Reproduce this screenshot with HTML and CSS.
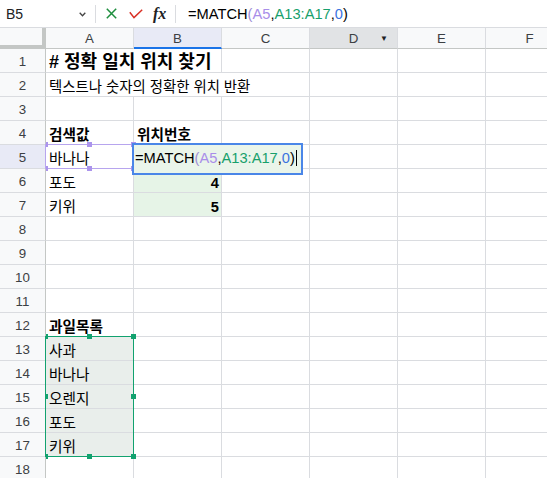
FILE: index.html
```html
<!DOCTYPE html>
<html>
<head>
<meta charset="utf-8">
<link rel="stylesheet" href="styles.css">
</head>
<body>
<div class="fbar">
  <div class="namebox"><span class="nb-text">B5</span>
    <svg class="chev" width="7" height="5" viewBox="0 0 7 5"><polyline points="0.7,0.8 3.5,3.8 6.3,0.8" fill="none" stroke="#444" stroke-width="1.3"/></svg>
  </div>
  <div class="sep"></div>
  <svg class="ic-x" width="11" height="11" viewBox="0 0 11 11"><path d="M0.8 0.8 L10.2 10.2 M10.2 0.8 L0.8 10.2" stroke="#1e8e3e" stroke-width="1.5" fill="none"/></svg>
  <svg class="ic-ok" width="14" height="10" viewBox="0 0 14 10"><polyline points="0.8,3.2 5,8.6 13.2,0.8" fill="none" stroke="#d93025" stroke-width="1.5"/></svg>
  <span class="fx">fx</span>
  <div class="sep sep2"></div>
  <div class="ftext">=MATCH<span class="par">(</span><span class="r1">A5</span>,<span class="r2">A13:A17</span>,<span class="num">0</span>)</div>
</div>

<div class="sheet">
  <div class="hrow">
    <div class="corner"></div>
    <div class="ch">A</div>
    <div class="ch ch-sel">B</div>
    <div class="ch">C</div>
    <div class="ch ch-hover">D<span class="tri">&#9660;</span></div>
    <div class="ch">E</div>
    <div class="ch">F</div>
  </div>

  <div class="row"><div class="rh">1</div><div class="c span2 title"># 정확 일치 위치 찾기</div><div class="c"></div><div class="c"></div><div class="c"></div><div class="c"></div></div>
  <div class="row"><div class="rh">2</div><div class="c span3 sub">텍스트나 숫자의 정확한 위치 반환</div><div class="c"></div><div class="c"></div><div class="c"></div></div>
  <div class="row"><div class="rh">3</div><div class="c"></div><div class="c"></div><div class="c"></div><div class="c"></div><div class="c"></div><div class="c"></div></div>
  <div class="row"><div class="rh">4</div><div class="c b">검색값</div><div class="c b">위치번호</div><div class="c"></div><div class="c"></div><div class="c"></div><div class="c"></div></div>
  <div class="row"><div class="rh rh-sel">5</div><div class="c">바나나</div><div class="c fill-g"></div><div class="c"></div><div class="c"></div><div class="c"></div><div class="c"></div></div>
  <div class="row"><div class="rh">6</div><div class="c">포도</div><div class="c fill-g b right">4</div><div class="c"></div><div class="c"></div><div class="c"></div><div class="c"></div></div>
  <div class="row"><div class="rh">7</div><div class="c">키위</div><div class="c fill-g b right">5</div><div class="c"></div><div class="c"></div><div class="c"></div><div class="c"></div></div>
  <div class="row"><div class="rh">8</div><div class="c"></div><div class="c"></div><div class="c"></div><div class="c"></div><div class="c"></div><div class="c"></div></div>
  <div class="row"><div class="rh">9</div><div class="c"></div><div class="c"></div><div class="c"></div><div class="c"></div><div class="c"></div><div class="c"></div></div>
  <div class="row"><div class="rh">10</div><div class="c"></div><div class="c"></div><div class="c"></div><div class="c"></div><div class="c"></div><div class="c"></div></div>
  <div class="row"><div class="rh">11</div><div class="c"></div><div class="c"></div><div class="c"></div><div class="c"></div><div class="c"></div><div class="c"></div></div>
  <div class="row"><div class="rh">12</div><div class="c b">과일목록</div><div class="c"></div><div class="c"></div><div class="c"></div><div class="c"></div><div class="c"></div></div>
  <div class="row"><div class="rh">13</div><div class="c fill-r">사과</div><div class="c"></div><div class="c"></div><div class="c"></div><div class="c"></div><div class="c"></div></div>
  <div class="row"><div class="rh">14</div><div class="c fill-r">바나나</div><div class="c"></div><div class="c"></div><div class="c"></div><div class="c"></div><div class="c"></div></div>
  <div class="row"><div class="rh">15</div><div class="c fill-r">오렌지</div><div class="c"></div><div class="c"></div><div class="c"></div><div class="c"></div><div class="c"></div></div>
  <div class="row"><div class="rh">16</div><div class="c fill-r">포도</div><div class="c"></div><div class="c"></div><div class="c"></div><div class="c"></div><div class="c"></div></div>
  <div class="row"><div class="rh">17</div><div class="c fill-r">키위</div><div class="c"></div><div class="c"></div><div class="c"></div><div class="c"></div><div class="c"></div></div>
  <div class="row"><div class="rh">18</div><div class="c"></div><div class="c"></div><div class="c"></div><div class="c"></div><div class="c"></div><div class="c"></div></div>

  <div class="rng rng-a5">
    <i class="hd tl"></i><i class="hd tm"></i><i class="hd tr"></i>
    <i class="hd bl"></i><i class="hd bm"></i><i class="hd br"></i>
  </div>
  <div class="rng rng-list">
    <i class="hd tl"></i><i class="hd tm"></i><i class="hd tr"></i>
    <i class="hd ml"></i><i class="hd mr"></i>
    <i class="hd bl"></i><i class="hd bm"></i><i class="hd br"></i>
  </div>
  <div class="editor">=MATCH<span class="par">(</span><span class="r1">A5</span>,<span class="r2">A13:A17</span>,<span class="num">0</span>)<span class="caret"></span></div>
</div>
</body>
</html>
```

FILE: styles.css
```css
html, body {
  margin: 0;
  padding: 0;
  width: 547px;
  height: 478px;
  overflow: hidden;
  background: #fff;
  font-family: "Liberation Sans", Arial, "Noto Sans CJK KR", sans-serif;
  color: #000;
}

/* formula bar */
.fbar {
  height: 27px;
  border-bottom: 1px solid #dadce0;
  display: flex;
  align-items: center;
}
.namebox {
  width: 95px;
  box-sizing: border-box;
  padding-left: 6px;
  padding-right: 9px;
  display: flex;
  align-items: center;
  font-size: 14px;
  color: #202124;
}
.nb-text { flex: 1; }
.chev { display: block; margin-top: 1px; }
.sep {
  width: 1px;
  height: 18px;
  background: #dadce0;
}
.ic-x { display: block; margin-left: 10px; }
.ic-ok { display: block; margin-left: 12px; }
.fx {
  margin-left: 10px;
  width: 14px;
  font-family: "Liberation Serif", serif;
  font-style: italic;
  font-weight: bold;
  font-size: 16px;
  color: #202124;
  line-height: 14px;
}
.sep2 { margin-left: 8px; }
.ftext {
  margin-left: 12px;
  font-size: 14.67px;
  color: #000;
  white-space: nowrap;
}

.par { color: #a08fd6; }
.r1 { color: #a98ee9; }
.r2 { color: #17a06c; }
.num { color: #3a73e0; }

/* sheet */
.sheet {
  position: relative;
  width: 574px;
}
.hrow, .row {
  display: grid;
  grid-template-columns: 46px repeat(6, 88px);
}
.hrow { height: 21px; }
.row { height: 24px; }

.corner {
  background: #f8f9fa;
  border-right: 4px solid #c4c7c5;
  border-bottom: 4px solid #c4c7c5;
}
.ch {
  background: #f8f9fa;
  border-right: 1px solid #dadce0;
  border-bottom: 1px solid #c4c7c5;
  font-size: 13.3px;
  color: #3c4043;
  display: flex;
  align-items: center;
  justify-content: center;
  position: relative;
  padding-top: 1px;
}
.ch-sel {
  background: #e8eaf6;
  border-bottom: 2px solid #1a73e8;
  padding-top: 2px;
}
.ch-hover { background: #e1e3e5; }
.tri {
  position: absolute;
  right: 9px;
  top: 6px;
  font-size: 8px;
  color: #202124;
}

.rh {
  background: #f8f9fa;
  border-right: 1px solid #c4c7c5;
  border-bottom: 1px solid #dadce0;
  font-size: 13.3px;
  color: #3c4043;
  display: flex;
  align-items: center;
  justify-content: center;
  padding-top: 2px;
}
.rh-sel { background: #e8eaf6; }

.c {
  border-right: 1px solid #dadce0;
  border-bottom: 1px solid #dadce0;
  padding: 0 3px 0 3px;
  display: flex;
  align-items: flex-end;
  line-height: 17px;
  font-size: 14.67px;
  white-space: nowrap;
  min-width: 0;
}
.span2 { grid-column: span 2; }
.span3 { grid-column: span 3; }
.title { font-size: 18px; font-weight: bold; line-height: 20px; }
.sub { font-size: 14.4px; }
.b { font-weight: bold; }
.right { justify-content: flex-end; padding-right: 2px; }
.fill-g { background: #e6f4e7; }
.fill-r { background: #e9eeeb; }

/* range highlights */
.rng {
  position: absolute;
  box-sizing: border-box;
}
.rng-a5 {
  left: 45px;
  top: 116px;
  width: 89px;
  height: 25px;
  border: 1px solid #b7a5ee;
}
.rng-list {
  left: 45px;
  top: 308px;
  width: 89px;
  height: 121px;
  border: 1px solid #12a26f;
}
.hd {
  position: absolute;
  width: 5px;
  height: 5px;
}
.rng-a5 .hd { background: #ab94ec; }
.rng-list .hd { background: #12a26f; }
.hd.tl, .hd.ml, .hd.bl { left: 0; width: 2px; }
.hd.tm, .hd.bm { left: 41px; }
.hd.tr, .hd.mr, .hd.br { right: -3px; }
.hd.tl, .hd.tm, .hd.tr { top: -3px; }
.hd.bl, .hd.bm, .hd.br { bottom: -3px; }
.hd.ml, .hd.mr { top: 57px; }

.editor {
  position: absolute;
  left: 132px;
  top: 115px;
  width: 171px;
  height: 32px;
  box-sizing: border-box;
  border: 2px solid #4a86e8;
  background: #eaf5ea;
  padding: 5px 0 0 1px;
  font-size: 14.67px;
  line-height: 17px;
  white-space: nowrap;
}
.caret {
  display: inline-block;
  width: 1px;
  height: 16px;
  background: #000;
  vertical-align: -3px;
  margin-left: 1px;
}
```
